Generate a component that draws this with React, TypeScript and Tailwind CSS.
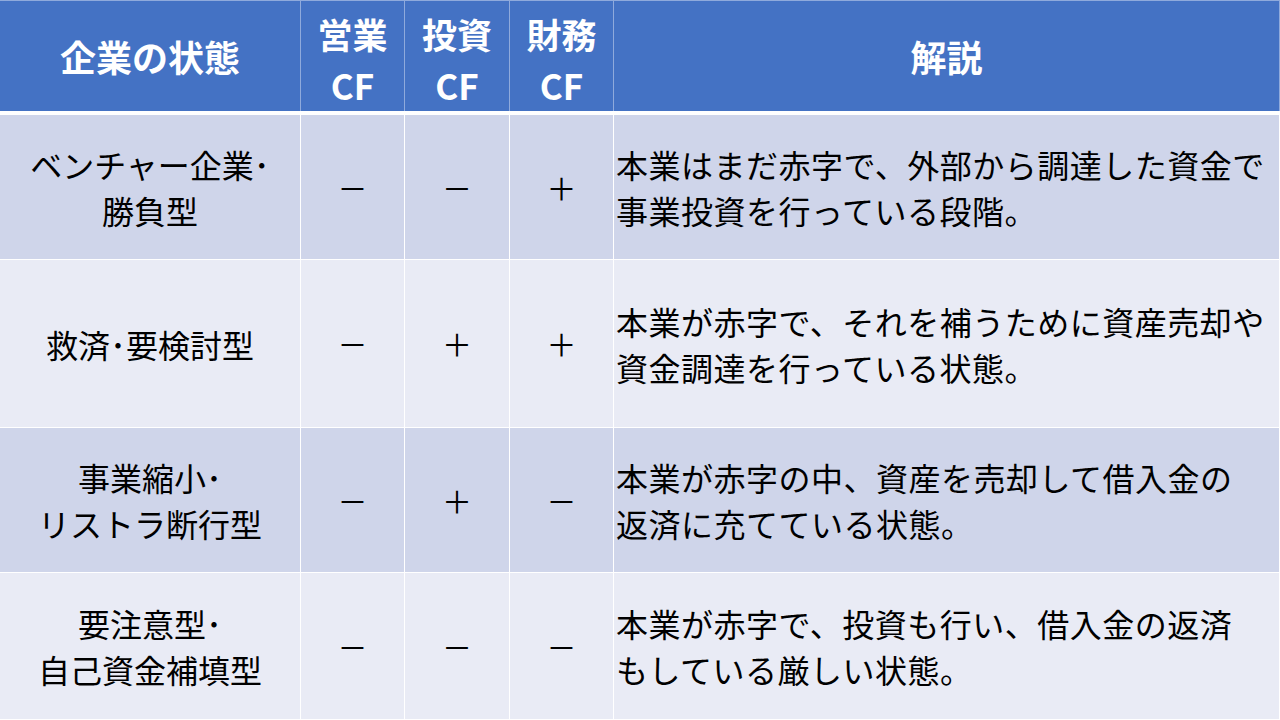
const cols = "grid grid-cols-[300px_103px_104px_103px_665px] gap-px";

type Row = {
  state: string[];
  op: string;
  inv: string;
  fin: string;
  note: string[];
  bg: string;
  h: string;
};

const rows: Row[] = [
  {
    state: ["ベンチャー企業･", "勝負型"],
    op: "－",
    inv: "－",
    fin: "＋",
    note: ["本業はまだ赤字で、外部から調達した資金で", "事業投資を行っている段階。"],
    bg: "bg-[#cfd5ea]",
    h: "h-[144px]",
  },
  {
    state: ["救済･要検討型"],
    op: "－",
    inv: "＋",
    fin: "＋",
    note: ["本業が赤字で、それを補うために資産売却や", "資金調達を行っている状態。"],
    bg: "bg-[#e9ebf5]",
    h: "h-[167px]",
  },
  {
    state: ["事業縮小･", "リストラ断行型"],
    op: "－",
    inv: "＋",
    fin: "－",
    note: ["本業が赤字の中、資産を売却して借入金の", "返済に充てている状態。"],
    bg: "bg-[#cfd5ea]",
    h: "h-[144px]",
  },
  {
    state: ["要注意型･", "自己資金補填型"],
    op: "－",
    inv: "－",
    fin: "－",
    note: ["本業が赤字で、投資も行い、借入金の返済", "もしている厳しい状態。"],
    bg: "bg-[#e9ebf5]",
    h: "h-[146px]",
  },
];

function Cell({ children, className = "" }: { children: React.ReactNode; className?: string }) {
  return <div className={`flex items-center justify-center ${className}`}>{children}</div>;
}

export default function App() {
  return (
    <div
      className="w-[1280px] h-[720px] overflow-hidden bg-white text-black"
      style={{ fontFamily: '"Noto Sans CJK JP", "Noto Sans", sans-serif' }}
    >
      <div className="flex flex-col w-[1280px]">
        <div className={`${cols} h-[111px] bg-[#8faadc] pt-px`}>
          <Cell className="bg-[#4472c4] text-white font-bold text-[36px] leading-[51px]">企業の状態</Cell>
          {["営業", "投資", "財務"].map((h) => (
            <Cell key={h} className="flex-col pt-[6px] bg-[#4472c4] text-white font-bold text-[35px] leading-[51px]">
              <span>{h}</span>
              <span>CF</span>
            </Cell>
          ))}
          <Cell className="bg-[#4472c4] text-white font-bold text-[36px] leading-[51px]">解説</Cell>
        </div>
        <div className="h-[4px] bg-white" />
        <div className="flex flex-col gap-px bg-white">
          {rows.map((r, i) => (
            <div key={i} className={`${cols} ${r.h} bg-white`}>
              <Cell className={`${r.bg} flex-col text-[32px] leading-[46px]`}>
                {r.state.map((s) => (
                  <span key={s} className="whitespace-nowrap">{s}</span>
                ))}
              </Cell>
              <Cell className={`${r.bg} text-[30px]`}>{r.op}</Cell>
              <Cell className={`${r.bg} text-[30px]`}>{r.inv}</Cell>
              <Cell className={`${r.bg} text-[30px]`}>{r.fin}</Cell>
              <div className={`${r.bg} flex flex-col justify-center pl-[2px] text-[32px] leading-[46px] tracking-[0.5px]`}>
                {r.note.map((n) => (
                  <span key={n} className="whitespace-nowrap">{n}</span>
                ))}
              </div>
            </div>
          ))}
        </div>
      </div>
    </div>
  );
}
